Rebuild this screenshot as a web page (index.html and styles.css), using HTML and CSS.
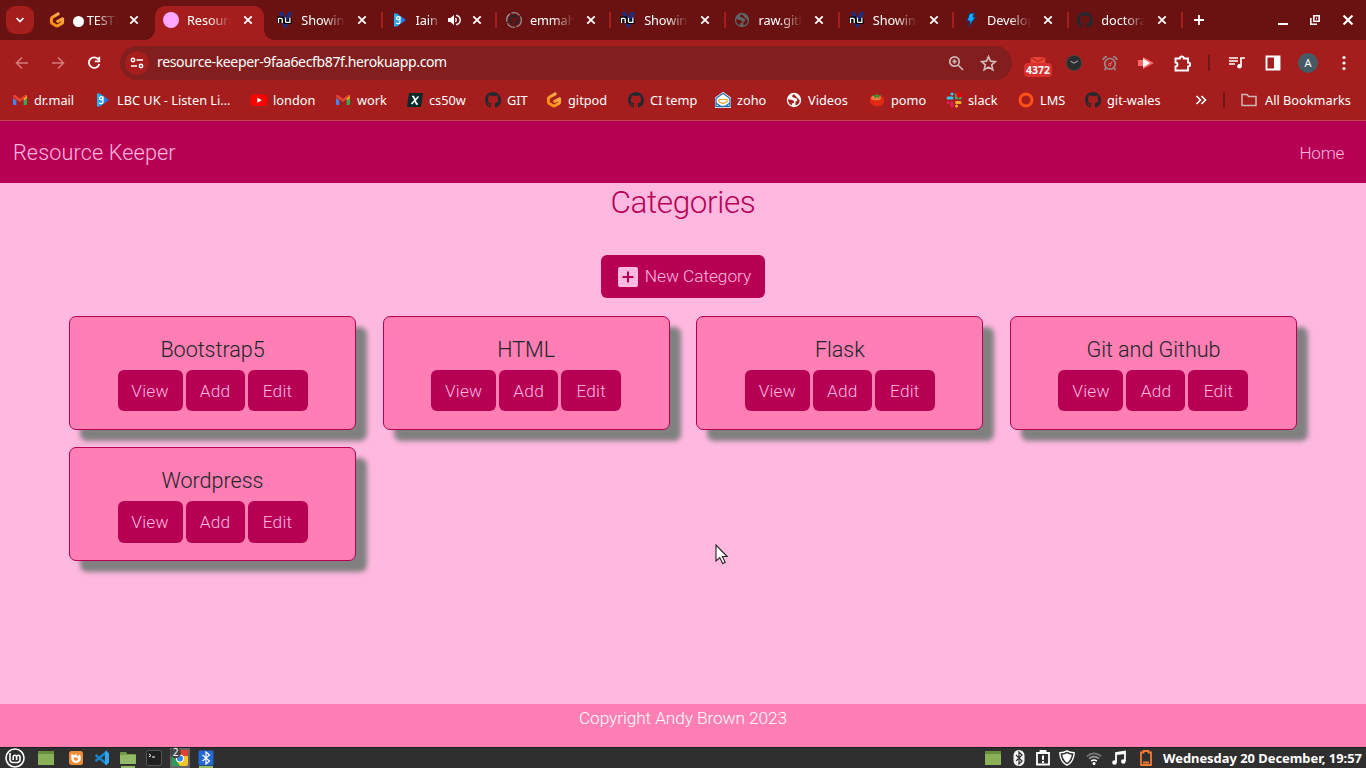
FILE: index.html
```html
<!DOCTYPE html>
<html lang="en">
<head>
<meta charset="utf-8">
<title>Resource Keeper</title>
<link rel="stylesheet" href="styles.css">
</head>
<body>
<svg class="defs" aria-hidden="true">
  <defs>
    <linearGradient id="orange" x1="0" y1="1" x2="1" y2="0"><stop offset="0" stop-color="#ff8a00"/><stop offset="1" stop-color="#ffb45b"/></linearGradient>
    <linearGradient id="blue" x1="0" y1="0" x2="1" y2="0"><stop offset="0" stop-color="#2bb5f5"/><stop offset="1" stop-color="#1769e0"/></linearGradient>
  </defs>
  <symbol id="github" viewBox="0 0 16 16"><path fill="#24292f" d="M8 0C3.58 0 0 3.58 0 8c0 3.54 2.29 6.53 5.47 7.59.4.07.55-.17.55-.38 0-.19-.01-.82-.01-1.49-2.01.37-2.53-.49-2.69-.94-.09-.23-.48-.94-.82-1.13-.28-.15-.68-.52-.01-.53.63-.01 1.08.58 1.23.82.72 1.21 1.87.87 2.33.66.07-.52.28-.87.51-1.07-1.78-.2-3.64-.89-3.64-3.95 0-.87.31-1.59.82-2.15-.08-.2-.36-1.02.08-2.12 0 0 .67-.21 2.2.82.64-.18 1.32-.27 2-.27s1.36.09 2 .27c1.53-1.04 2.2-.82 2.2-.82.44 1.1.16 1.92.08 2.12.51.56.82 1.27.82 2.15 0 3.07-1.87 3.75-3.65 3.95.29.25.54.73.54 1.48 0 1.07-.01 1.93-.01 2.2 0 .21.15.46.55.38A8.01 8.01 0 0 0 16 8c0-4.42-3.58-8-8-8z"/></symbol>
  <symbol id="gitpod" viewBox="0 0 16 16"><path fill="none" stroke="url(#orange)" stroke-width="3" stroke-linecap="round" stroke-linejoin="round" d="M9.2 1.9 3.4 5.2Q2.4 5.8 2.4 6.8V10q0 1 .9 1.500L7.100 13.700q.9.500 1.800 0L12.700 11.500q.9-.5.900-1.500V6.700L8.700 9.400"/></symbol>
  <symbol id="nu" viewBox="0 0 16 16"><path d="M2 0h4l2.300 6L11 0h4L9.800 15.500H7z" fill="#1c2d80"/><path d="M1.500 11V6.300h3.700V11M8.500 6.200v4.200h4.500V6m0 0v5.300" fill="none" stroke="#000" stroke-width="3.400"/><path d="M1.500 11V6.300h2.700q1 0 1 1V11M8.500 5.800v3.600q0 1 1 1h3.400V5.800v5" fill="none" stroke="#fff" stroke-width="1.300"/></symbol>
  <symbol id="lbc" viewBox="0 0 16 16"><path fill="url(#blue)" d="M2 1.500h3L14 8 5 14.500H2z"/><circle cx="6.200" cy="6.200" r="1.600" fill="none" stroke="#fff" stroke-width="1.300"/><path d="M7.900 4.500v5.300q0 1.900-1.900 1.900-1.100 0-1.800-.6" fill="none" stroke="#fff" stroke-width="1.300"/></symbol>
  <symbol id="close" viewBox="0 0 10 10"><path d="m1.300 1.300 7.400 7.400m0-7.400-7.400 7.400" fill="none" stroke="#fff" stroke-width="1.800"/></symbol>
  <symbol id="gmail" viewBox="0 0 16 16"><path fill="#4285f4" d="M1 4v8q0 1 1 1h2.300V7z"/><path fill="#34a853" d="M15 4v8q0 1-1 1h-2.300V7z"/><path fill="#fbbc04" d="M11.700 4.200 15 3v3l-3.300 2.500z"/><path fill="#c5221f" d="M1 4.300 4.300 4v4.500L1 6z"/><path fill="#ea4335" d="M1 4.500Q1.200 2 3.500 3.300L8 6.700l4.500-3.400Q14.500 2.500 15 4l-7 6-3.700-2.800z"/></symbol>
  <symbol id="globe" viewBox="0 0 16 16"><circle cx="8" cy="8" r="7.200" fill="currentColor"/><path class="land" d="M8 2.300q-2.600 1.200-1.600 2.700l3.400 1.300q1.800.3 1.500 1.900-.2 1.400-1.800 1.300l-.2 3.900q4.200-1 4.400-5.200zM1.800 7.300l4.500.6 1.900 1.700-.3 1.500-2 .5-.2 1.900q-3.500-1.800-3.900-6.200z"/></symbol>
</svg>

<header class="browser">
  <div class="tabs">
    <div class="search"><svg width="12" height="12" viewBox="0 0 12 12"><path d="m2.500 4 3.500 3.500L9.500 4" fill="none" stroke="#fff" stroke-width="1.700"/></svg></div>
    <div class="tab"><svg class="fav"><use href="#gitpod"/></svg><span class="tt"><i class="dot"></i>TESTI</span><svg class="x"><use href="#close"/></svg></div>
    <div class="tab active"><svg class="fav" viewBox="0 0 16 16"><circle cx="8" cy="8" r="8" fill="#ffa6ff"/></svg><span class="tt">Resourc</span><svg class="x"><use href="#close"/></svg></div>
    <div class="tab sep"><svg class="fav"><use href="#nu"/></svg><span class="tt">Showing</span><svg class="x"><use href="#close"/></svg></div>
    <div class="tab sep"><svg class="fav"><use href="#lbc"/></svg><span class="tt audio">Iain D</span><svg class="snd" viewBox="0 0 14 14"><path fill="#fff" d="M1 5h2.500L7 2v10L3.500 9H1z"/><path d="M8.500 5q1.500 2 0 4M9 2.200q4.200 1 4.200 4.800T9 11.800" fill="none" stroke="#fff" stroke-width="1.400"/></svg><svg class="x"><use href="#close"/></svg></div>
    <div class="tab sep"><svg class="fav" viewBox="0 0 16 16"><circle cx="8" cy="8" r="7.300" fill="none" stroke="#969096" stroke-width="1.300" stroke-dasharray="9 1.500"/><use href="#github" x="3" y="3" width="10" height="10"/></svg><span class="tt">emmah</span><svg class="x"><use href="#close"/></svg></div>
    <div class="tab sep"><svg class="fav"><use href="#nu"/></svg><span class="tt">Showing</span><svg class="x"><use href="#close"/></svg></div>
    <div class="tab sep"><svg class="fav world"><use href="#globe"/></svg><span class="tt">raw.gith</span><svg class="x"><use href="#close"/></svg></div>
    <div class="tab sep"><svg class="fav"><use href="#nu"/></svg><span class="tt">Showing</span><svg class="x"><use href="#close"/></svg></div>
    <div class="tab sep"><svg class="fav" viewBox="0 0 16 16"><path d="m6.500 1.500 5-.5-1.500 4h2.500L6 14.500 7 9H4z" fill="#12a8f4" stroke="#073b78"/></svg><span class="tt">Develop</span><svg class="x"><use href="#close"/></svg></div>
    <div class="tab sep"><svg class="fav"><use href="#github"/></svg><span class="tt">doctora</span><svg class="x"><use href="#close"/></svg></div>
    <svg class="plus" viewBox="0 0 12 12"><path d="M6 1v10M1 6h10" stroke="#fff" stroke-width="1.800"/></svg>
    <div class="win">
      <svg width="10" height="12" viewBox="0 0 10 12"><path d="M0 10h10" stroke="#fff" stroke-width="2"/></svg>
      <svg width="10" height="10" viewBox="0 0 10 10"><path d="M3.800.8h5.400v5.400H3.800zM.8 3v6.200H7M6 3.500h1" fill="none" stroke="#fff" stroke-width="1.600"/></svg>
      <svg width="12" height="12"><use href="#close"/></svg>
    </div>
  </div>
  <div class="toolbar">
    <svg class="nav back" viewBox="0 0 14 14"><path d="M13 7H2M7 1.500 1.500 7 7 12.500" fill="none" stroke="#d27c7c" stroke-width="1.600"/></svg>
    <svg class="nav fwd" viewBox="0 0 14 14"><path d="M1 7h11M7 1.500 12.500 7 7 12.500" fill="none" stroke="#d27c7c" stroke-width="1.600"/></svg>
    <svg class="nav" viewBox="0 0 14 14"><path d="M11.500 3.500A5.300 5.300 0 1 0 12.300 8M12.300.8v4.500H7.800" fill="none" stroke="#fff" stroke-width="1.800"/></svg>
    <div class="omni">
      <span class="site"><svg width="14" height="14" viewBox="0 0 14 14" fill="none" stroke="#fff" stroke-width="1.500"><circle cx="3" cy="4" r="1.700"/><path d="M6.500 4H13M1 10h6"/><circle cx="11" cy="10" r="1.700"/></svg></span>
      <span class="url">resource-keeper-9faa6ecfb87f.herokuapp.com</span>
      <svg class="mag" viewBox="0 0 16 16" fill="none" stroke="#d0b6b6" stroke-width="1.700"><circle cx="6.500" cy="6.500" r="4.700"/><path d="m10 10 5 5M6.500 4.300v4.400M4.300 6.500h4.400"/></svg>
      <svg class="star" viewBox="0 0 16 16"><path d="m8 1.500 1.900 4.300 4.700.4-3.600 3.100 1.100 4.600L8 11.400l-4.100 2.500L5 9.300 1.400 6.200l4.700-.4z" fill="none" stroke="#d5bcbc" stroke-width="1.500"/></svg>
    </div>
    <div class="exts">
      <div class="mail"><svg width="16" height="12" viewBox="0 0 16 12"><path fill="#e94335" d="M0 0h16v8H0z"/><path d="m0 0 8 5 8-5" fill="none" stroke="#a51d1d"/></svg><b>4372</b></div>
      <svg class="e clock" viewBox="0 0 16 16"><circle cx="8" cy="8" r="7.600" fill="#2b2e30" stroke="#44484a" stroke-width=".8"/><path d="m4.500 6.200 3.500 2 4-2.300" fill="none" stroke="#b3b8ad"/></svg>
      <svg class="e alarm" viewBox="0 0 16 16" fill="none" stroke="#9b8588" stroke-width="1.700"><circle cx="8" cy="8.800" r="5.300"/><path d="M1.200 5Q1.500 2 5 1.500M14.800 5Q14.500 2 11 1.500M4.200 12.800l-1.700 2.400M11.800 12.800l1.700 2.400"/><path d="m10.300 6.500-2 2.500" stroke="#e17474" stroke-width="1.200"/><circle cx="7.600" cy="9.600" r="1.200" stroke="#e17474" stroke-width="1"/></svg>
      <svg class="e arrow" viewBox="0 0 16 16"><path fill="#f66" d="M0 5h5V2l11 6-11 6v-3H0z"/><path fill="#fff" d="M5 3.500 12 8l-7 4.500z"/></svg>
      <svg class="e puzzle" viewBox="0 0 17 17"><path d="M1.500 3.500h4.300q0-2 2-2t2 2h4.200v4q2.200 0 2.200 2t-2.200 2V15.500H1.500v-4q2 0 2-2t-2-2z" fill="none" stroke="#fff" stroke-width="1.900"/></svg>
      <i class="bar"></i>
      <svg class="e queue" viewBox="0 0 16 16"><path d="M0 3h9M0 6h9M0 9h6M12 11V3h4" fill="none" stroke="#fff" stroke-width="1.700"/><circle cx="10.500" cy="11.300" r="2.300" fill="#fff"/></svg>
      <svg class="e panel" viewBox="0 0 16 16"><path d="M1.500 1.500h13v13h-13z" fill="none" stroke="#fff" stroke-width="1.900"/><path fill="#fff" d="M9 1h6v14H9z"/></svg>
      <span class="avatar">A</span>
      <svg class="e dots" viewBox="0 0 4 16" fill="#fff"><circle cx="2" cy="2.500" r="1.600"/><circle cx="2" cy="8" r="1.600"/><circle cx="2" cy="13.500" r="1.600"/></svg>
    </div>
  </div>
  <div class="marks">
    <div class="m m1"><svg><use href="#gmail"/></svg>dr.mail</div>
    <div class="m m2"><svg><use href="#lbc"/></svg>LBC UK - Listen Li…</div>
    <div class="m m3"><svg viewBox="0 0 16 16"><rect y="2.500" width="16" height="11.500" rx="3" fill="#f00"/><path fill="#fff" d="m6.300 5.500 4.400 2.700-4.400 2.700z"/></svg>london</div>
    <div class="m m4"><svg><use href="#gmail"/></svg>work</div>
    <div class="m m5"><svg viewBox="0 0 16 16"><path fill="#06292a" d="M2 1h14l-2 14H0z"/><path d="M5 4.500h1.500L9.500 12H11M11.500 4.500 4.500 12" fill="none" stroke="#fff" stroke-width="1.700"/></svg>cs50w</div>
    <div class="m m6"><svg><use href="#github"/></svg>GIT</div>
    <div class="m m7"><svg><use href="#gitpod"/></svg>gitpod</div>
    <div class="m m8"><svg><use href="#github"/></svg>CI temp</div>
    <div class="m m9"><svg viewBox="0 0 16 16"><path fill="#fff" stroke="#fff" stroke-width="2" d="M1 6 8 1l7 5v9H1z"/><path d="M1 6.500 8 1.200l7 5.300v8H1zM1 11l5 3.500M15 11l-5 3.500" fill="none" stroke="#226db4" stroke-width="1.300"/><path d="M4 7.500h8v2.300q-4 3-8 0z" fill="#fff" stroke="#e8a72c" stroke-width="1.200"/></svg>zoho</div>
    <div class="m m10"><svg class="videos"><use href="#globe"/></svg>Videos</div>
    <div class="m m11"><svg viewBox="0 0 16 16"><ellipse cx="8" cy="8.500" rx="7.300" ry="6" fill="#e02913"/><ellipse cx="7" cy="6" rx="5" ry="2.300" fill="#ff7a4b"/><path fill="#408c2e" d="m8 1 1 2 4 .5-3 1 .5 2.500L8 5 5 7l.5-2.500-3-1L7 3z"/></svg>pomo</div>
    <div class="m m12"><svg viewBox="0 0 16 16" fill="none" stroke-width="3" stroke-linecap="round"><path stroke="#36c5f0" d="M2 6h4M6 2h.1"/><path stroke="#2eb67d" d="M10.500 2.500V6M14 6h.1"/><path stroke="#e01e5a" d="M6 10.500v3.500M2 10.500h.1"/><path stroke="#ecb22e" d="M10.500 10.500H14M10.500 14h.1"/><circle cx="13" cy="3" r="2.700" fill="#f00000"/></svg>slack</div>
    <div class="m m13"><svg viewBox="0 0 16 16"><circle cx="8" cy="8" r="6" fill="none" stroke="#ff5019" stroke-width="3"/></svg>LMS</div>
    <div class="m m14"><svg><use href="#github"/></svg>git-wales</div>
    <svg class="more" viewBox="0 0 12 12"><path d="m1.500 2 4 4-4 4m5-8 4 4-4 4" fill="none" stroke="#fff" stroke-width="1.600"/></svg>
    <i class="bar"></i>
    <div class="m all"><svg viewBox="0 0 16 16"><path d="M1 2.500h5l1.700 2H15v9H1z" fill="none" stroke="#cfb5b5" stroke-width="1.500"/></svg>All Bookmarks</div>
  </div>
</header>

<div class="page">
  <nav class="navbar"><a class="brand">Resource Keeper</a><a class="home">Home</a></nav>
  <main>
    <h1>Categories</h1>
    <a class="btn new"><svg width="20" height="20" viewBox="0 0 20 20"><rect width="20" height="20" rx="2" fill="#ffb8e0"/><path d="M10 4.500v11M4.500 10h11" stroke="#b70054" stroke-width="2"/></svg><span>New Category</span></a>
    <section class="cards">
      <article class="card"><h2>Bootstrap5</h2><div class="acts"><a class="btn v">View</a><a class="btn a">Add</a><a class="btn d">Edit</a></div></article>
      <article class="card"><h2>HTML</h2><div class="acts"><a class="btn v">View</a><a class="btn a">Add</a><a class="btn d">Edit</a></div></article>
      <article class="card"><h2>Flask</h2><div class="acts"><a class="btn v">View</a><a class="btn a">Add</a><a class="btn d">Edit</a></div></article>
      <article class="card"><h2>Git and Github</h2><div class="acts"><a class="btn v">View</a><a class="btn a">Add</a><a class="btn d">Edit</a></div></article>
      <article class="card"><h2>Wordpress</h2><div class="acts"><a class="btn v">View</a><a class="btn a">Add</a><a class="btn d">Edit</a></div></article>
    </section>
  </main>
  <footer>Copyright Andy Brown 2023</footer>
</div>

<div class="taskbar">
  <div class="launch">
    <svg class="t mint" viewBox="0 0 20 20" fill="none" stroke="#fff"><circle cx="10" cy="10" r="9" stroke-width="1.600"/><path d="M5 5v6.500q0 3 3 3h4q3 0 3-3V9q0-1.800-1.700-1.800T11.600 9v3M11.600 9q0-1.800-1.700-1.800T8.200 9v3" stroke-width="1.600"/></svg>
    <svg class="t" viewBox="0 0 16 16"><path fill="#8bb158" d="M0 1h16v14H0z"/><path fill="#688d3b" d="M0 1h16v3H0z"/></svg>
    <svg class="t" viewBox="0 0 16 16"><rect x="1" y="1" width="14" height="14" rx="2.500" fill="#f38b35"/><path fill="#fff" d="M3.500 3.500 6 5.200l3-1.700-.5 2 2 .5 1.500-2q2 6-.8 8-3.200 2-6.200 0-2.700-2.500-1.500-8.500z"/><path fill="#f38b35" d="m6 7 2 .8 1.500-.6.500 2.500q-2 2-4 0z"/></svg>
    <svg class="t" viewBox="0 0 16 16"><path d="m1.500 5 10.500 8.500V2.500L1.500 11" fill="none" stroke="#1688d1" stroke-width="2.300"/><path fill="#31a5ed" d="m11 1 4 2v10l-4 2z"/></svg>
    <svg class="t on" viewBox="0 0 16 16"><path fill="#739c47" d="M0 3q0-1 1-1h5l1.500 2H15q1 0 1 1v9H0z"/><path fill="#91b967" d="M0 5h16v8q0 1-1 1H1q-1 0-1-1z"/></svg>
    <svg class="t" viewBox="0 0 16 16"><rect x=".5" y=".5" width="15" height="15" rx="2" fill="#202020" stroke="#555"/><path d="m3 4 2 1.500L3 7m3 0h3" fill="none" stroke="#fff"/></svg>
    <div class="chrome on"><svg viewBox="0 0 16 16" width="16" height="16"><rect width="16" height="16" rx="2" fill="#f6c52c"/><path fill="#e34133" d="M0 0h16v6H8L4 10 0 5z"/><path fill="#25a05a" d="M0 4 8 16H2q-2 0-2-2z"/><circle cx="8" cy="8.500" r="4" fill="#fff"/><circle cx="8" cy="8.500" r="3" fill="#3585ec"/></svg><span>2</span></div>
    <svg class="t on" viewBox="0 0 16 16"><rect x=".5" y=".5" width="15" height="15" rx="1.500" fill="#2369d5"/><path d="m4.500 5 7 6L8 14V2l3.500 3-7 6" fill="none" stroke="#fff" stroke-width="1.200"/></svg>
  </div>
  <div class="tray">
    <svg class="t" viewBox="0 0 16 16"><path fill="#8bb158" d="M0 1h16v14H0z"/><path fill="#688d3b" d="M0 1h16v3H0z"/></svg>
    <svg class="t" viewBox="0 0 16 16"><rect x="2.500" width="11" height="16" rx="5.500" fill="#f4f4f4"/><path d="m5 5 6 6-3 3V2l3 3-6 6" fill="none" stroke="#303030" stroke-width="1.200"/></svg>
    <svg class="t" viewBox="0 0 16 16"><path d="M2 3h12v11.500H2zM5.500 3V1h5v2" fill="none" stroke="#fff" stroke-width="1.800"/><path d="M8 5.500v4.300m0 1.200v2" stroke="#fff" stroke-width="2"/></svg>
    <svg class="t" viewBox="0 0 16 16"><path d="M8 .8Q5 2.500.8 2.800 1.300 12 8 15.200 14.700 12 15.200 2.800 11 2.500 8 .8z" fill="none" stroke="#fff" stroke-width="1.400"/><path fill="#fff" d="M8 3.300Q6 4.500 3.300 4.800 4 10 8 12.800 12 10 12.700 4.800 10 4.500 8 3.300z"/></svg>
    <svg class="t" viewBox="0 0 16 16" fill="none" stroke-width="1.700"><path stroke="#777" d="M.8 6.300q7.200-6 14.400 0"/><path stroke="#999" d="M3 8.700q5-4 10 0"/><path stroke="#fff" d="M5.200 11q2.800-2 5.600 0"/><circle cx="8" cy="13.500" r="1.500" fill="#fff"/></svg>
    <svg class="t" viewBox="0 0 16 16"><path d="M5 12V3l9-1.500V11M5 4l9-1" fill="none" stroke="#fff" stroke-width="1.800"/><circle cx="3.500" cy="12.500" r="2.300" fill="#fff"/><circle cx="12.300" cy="11.500" r="2.300" fill="#fff"/></svg>
    <svg class="t" viewBox="0 0 16 16"><path d="M3 2.500h2.500V1h5v1.500H13v12.500H3zM5 12.500h6" fill="none" stroke="#f67a32" stroke-width="1.800"/></svg>
    <b class="time">Wednesday 20 December, 19:57</b>
  </div>
</div>
<svg class="cursor" viewBox="0 0 13 21"><path d="M1 1v16l3.800-3.400 2.800 6 2.600-1.200-2.800-5.900h4.800z" fill="#fff" stroke="#222" stroke-width="1.100"/></svg>
</body>
</html>
```
FILE: styles.css
```css
* { box-sizing: border-box; }
body { margin: 0; width: 1366px; height: 768px; overflow: hidden; display: flex; flex-direction: column; position: relative; font-family: "Noto Sans", sans-serif; }
svg { flex: none; display: block; }
.defs { position: absolute; width: 0; height: 0; }

/* browser frame */
.browser { height: 121px; flex: none; background: #a51d1d; border-bottom: 1px solid #b94b4b; color: #fff; font-size: 12.750px; }
.tabs { height: 40px; background: #6a1212; display: flex; align-items: center; padding-left: 6px; }
.search { width: 28px; height: 28px; border-radius: 9px; background: #a51d1d; display: grid; place-items: center; margin-right: 6px; }
.tab { width: 114.300px; height: 40px; flex: none; display: flex; align-items: center; padding-left: 8.700px; position: relative; }
.fav { width: 16px; height: 16px; margin-right: 8px; }
.tt { width: 45px; white-space: nowrap; letter-spacing: -.1px; -webkit-mask-image: linear-gradient(90deg, #000 50%, transparent 98%); mask-image: linear-gradient(90deg, #000 50%, transparent 98%); }
.dot { display: inline-block; width: 11px; height: 11px; border-radius: 50%; background: #fff; margin-right: 3px; vertical-align: -2px; }
.tt.audio { width: 25px; }
.snd { width: 14px; height: 14px; margin: 0 -1px 0 6px; }
.x { width: 10px; height: 10px; margin-left: 11px; }
.audio ~ .x { margin-left: 12px; }
.sep::after { content: ""; position: absolute; right: 0; top: 12px; width: 2px; height: 16px; background: #a51d1d; }
.active::before { content: ""; position: absolute; left: .7px; top: 6px; width: 109px; height: 34px; background: #a51d1d; border-radius: 10px 10px 0 0; }
.active::after { content: ""; position: absolute; left: -9px; bottom: 0; width: 129px; height: 10px; background: radial-gradient(circle at 0 0, transparent 9.500px, #a51d1d 10px) left / 10px 10px no-repeat, radial-gradient(circle at 10px 0, transparent 9.500px, #a51d1d 10px) right / 10px 10px no-repeat; }
.active > * { position: relative; }
.plus { width: 12px; height: 12px; margin-left: 10px; }
.win { margin-left: auto; display: flex; align-items: center; gap: 22px; padding-right: 12px; }
.toolbar { height: 46px; display: flex; align-items: center; padding-left: 15px; }
.nav { width: 14px; height: 14px; margin-right: 22px; }
.nav:nth-child(3) { margin-right: 19px; }
.omni { width: 892px; height: 34px; border-radius: 17px; background: #831e1e; display: flex; align-items: center; padding: 0 15px 0 5px; }
.site { width: 24px; height: 24px; border-radius: 50%; background: #a51d1d; display: grid; place-items: center; margin-right: 8px; }
.url { flex: 1; font-size: 14px; letter-spacing: -.35px; line-height: 18px; padding-bottom: 2px; }
.mag { width: 16px; height: 16px; margin-right: 16px; }
.star { width: 17px; height: 17px; }
.exts { flex: 1; display: flex; align-items: center; padding-left: 12px; }
.mail { width: 28px; height: 22px; display: flex; flex-direction: column; align-items: center; margin: 9px 14px 0 0; }
.mail b { width: 28px; height: 14px; margin-top: -5px; border-radius: 4px; background: #d93030; font-size: 10.500px; line-height: 14px; text-align: center; flex: none; }
.mail svg { height: 11px; }
.e { width: 16px; height: 16px; margin-right: 20px; }
.puzzle { width: 17px; height: 17px; margin-right: 17px; }
.bar { width: 2px; height: 16px; background: #701818; }
.exts .bar { margin-right: 19px; }
.panel { margin-right: 17px; }
.avatar { width: 20px; height: 20px; border-radius: 50%; background: #465a65; font-size: 11px; line-height: 20px; text-align: center; margin-right: 24px; }
.dots { width: 4px; margin: 0; }
.marks { display: flex; align-items: center; height: 28px; padding-left: 12px; }
.m { flex: none; display: flex; align-items: center; white-space: nowrap; }
.m svg { width: 16px; height: 16px; margin-right: 6px; }
.m1 { width: 83px; } .m2 { width: 156px; } .m3 { width: 84px; } .m4 { width: 72px; }
.m5 { width: 78px; } .m6 { width: 61px; } .m7 { width: 82px; } .m8 { width: 87px; }
.m9 { width: 71px; } .m10 { width: 83px; } .m11 { width: 77px; } .m12 { width: 72px; }
.m13 { width: 67px; } .m14 { width: 110px; }
.more { width: 12px; height: 12px; margin-right: 16px; }
.marks .bar { margin-right: 16px; }
.all svg { margin-right: 8px; }
.world { color: #5f6368; --land: #6a1212; }
.videos { color: #fff; --land: #a51d1d; }
.land { fill: var(--land); }

/* web page */
.page { flex: 1; display: flex; flex-direction: column; background: #ffb8e0; font-family: Roboto, sans-serif; font-weight: 350; }
.navbar { height: 62px; background: #b70054; color: #ffb8e0; display: flex; align-items: center; justify-content: space-between; padding: 0 22px 0 13px; }
.brand { font-size: 21.600px; letter-spacing: .15px; }
.home { font-size: 17px; letter-spacing: -.25px; padding-top: 1px; }
main { flex: 1; display: flex; flex-direction: column; align-items: center; }
h1 { margin: 0; height: 72px; font-size: 31.500px; line-height: 39px; font-weight: 300; color: #b70054; letter-spacing: -.4px; }
h2 { margin: 0; height: 26px; line-height: 26px; font-size: 21.600px; font-weight: 350; color: #212529; letter-spacing: -.05px; }
.btn { background: #b70054; color: #ffb8e0; border-radius: 6px; height: 41.400px; display: flex; align-items: center; justify-content: center; font-size: 17.300px; letter-spacing: .2px; }
.new { width: 164px; height: 43px; gap: 7px; padding-left: 3px; margin-bottom: 18px; letter-spacing: -.05px; }
.new span { white-space: nowrap; padding-bottom: 1px; }
.cards { width: 1228px; display: grid; grid-template-columns: repeat(4, 287px); justify-content: space-between; row-gap: 17px; }
.card { height: 114px; border: 1px solid #b70054; border-radius: 7px; background: #ff7eb3; box-shadow: 11px 11px 5px #808080; display: flex; flex-direction: column; align-items: center; padding-top: 20px; }
.card:nth-child(n+5) .btn { height: 42px; }
.acts { display: flex; gap: 3px; margin-top: 7px; }
.v { width: 65px; } .a { width: 59px; } .d { width: 60px; }
footer { height: 43px; background: #ff7eb3; color: #fff; text-align: center; line-height: 29px; font-size: 17.300px; letter-spacing: -.1px; }

/* desktop panel */
.taskbar { height: 21px; flex: none; background: #2f2f2f; border-top: 1px solid #1e1e1e; display: flex; align-items: center; justify-content: space-between; padding: 0 4px 0 5px; color: #fff; }
.launch, .tray { display: flex; align-items: center; height: 20px; }
.t { width: 16px; height: 16px; margin-right: 10px; }
.mint { width: 20px; height: 20px; margin-right: 13px; }
.launch .t:nth-child(2) { margin-right: 14px; }
.on { box-shadow: 0 3px 0 -1px #91b967; }
.chrome { width: 20px; height: 20px; background: #656565; display: grid; place-items: center; position: relative; margin: 0 8px 0 -2px; }
.chrome span { position: absolute; left: 0; top: -1px; width: 11px; height: 11px; border-radius: 50%; background: #444; font-size: 10px; line-height: 11px; text-align: center; }
.tray .t { margin-right: 9px; }
.tray .t:nth-child(1) { margin-right: 10px; }
.tray .t:nth-child(2), .tray .t:nth-child(3) { margin-right: 8px; }
.tray .t:nth-child(4), .tray .t:nth-child(6) { margin-right: 11px; }
.time { font-size: 12.900px; white-space: nowrap; }
.cursor { position: absolute; left: 715px; top: 544px; width: 13px; height: 21px; }
```
